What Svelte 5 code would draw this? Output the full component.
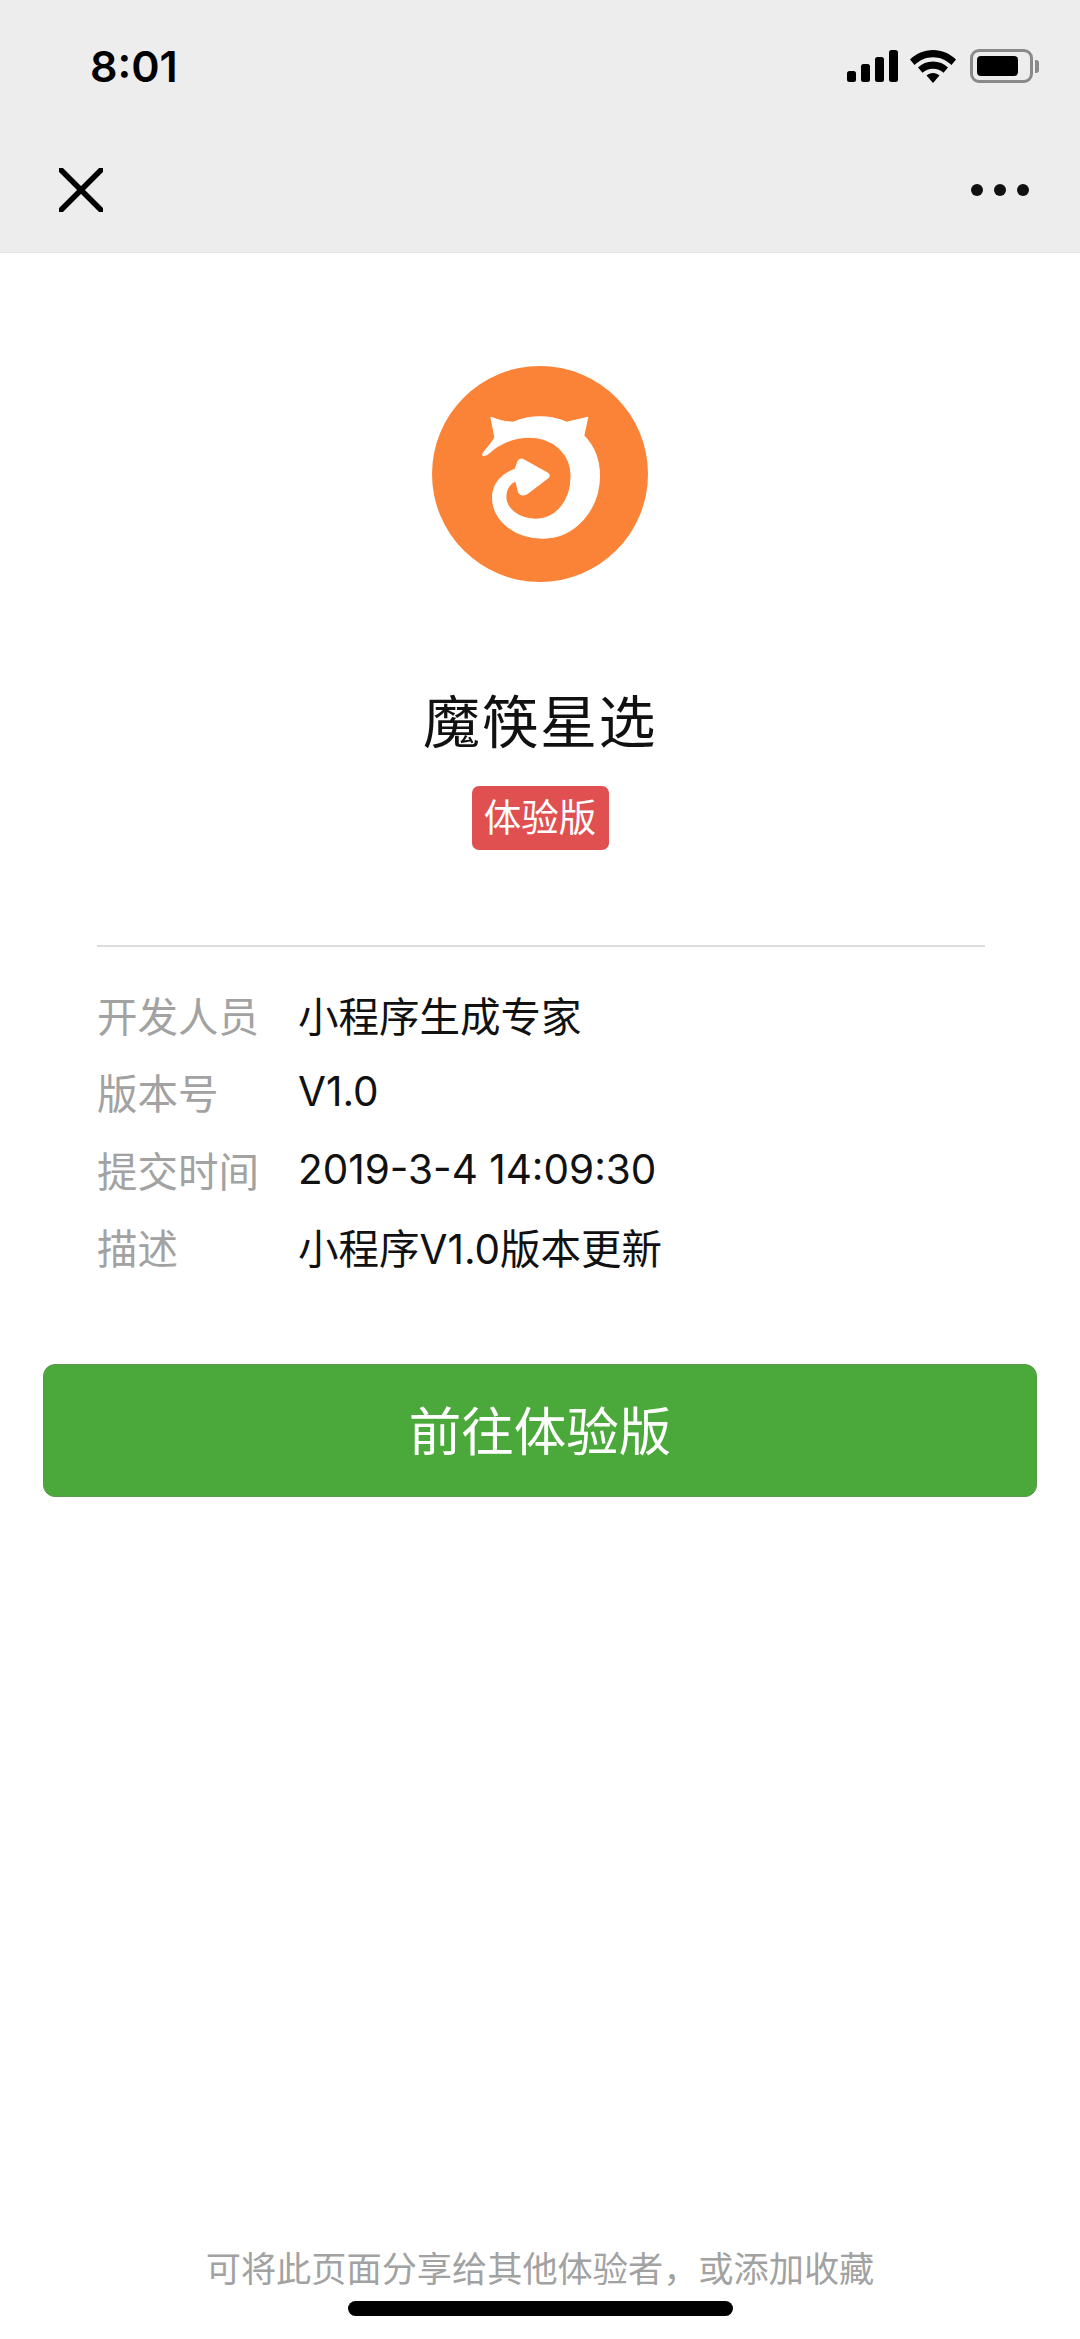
<script>
  const rows = [
    { label: "开发人员", value: "小程序生成专家" },
    { label: "版本号", value: "V1.0" },
    { label: "提交时间", value: "2019-3-4 14:09:30" },
    { label: "描述", value: "小程序V1.0版本更新" },
  ];
</script>

<div class="page">
  <header class="top">
    <div class="status">
      <span class="time">8:01</span>
      <div class="status-icons">
        <svg width="51" height="32" viewBox="0 0 51 32" class="signal">
          <rect x="0" y="21" width="9" height="11" rx="2.5" />
          <rect x="14" y="14" width="9" height="18" rx="2.5" />
          <rect x="28" y="7" width="9" height="25" rx="2.5" />
          <rect x="42" y="0" width="9" height="32" rx="2.5" />
        </svg>
        <svg width="46" height="33" viewBox="0 0 46 33" class="wifi">
          <path d="M23 0C14 0 6.500 3.500 0 9.500L4.500 15C10 10 16 7.300 23 7.300S36 10 41.500 15L46 9.500C39.500 3.500 32 0 23 0Z" />
          <path d="M23 11.500C17 11.500 12 13.800 8 17.500L12.500 22.800C15.500 20.200 19 18.800 23 18.800S30.500 20.200 33.500 22.800L38 17.500C34 13.800 29 11.500 23 11.500Z" />
          <path d="M23 23C20.500 23 18.300 23.900 16.500 25.500L23 33L29.500 25.500C27.700 23.900 25.500 23 23 23Z" />
        </svg>
        <div class="battery"><span class="level"></span></div>
        <span class="cap"></span>
      </div>
    </div>
    <nav class="nav">
      <svg width="44" height="44" viewBox="0 0 44 44" class="close">
        <path d="M2 2L42 42M42 2L2 42" />
      </svg>
      <div class="dots"><span></span><span></span><span></span></div>
    </nav>
  </header>

  <main class="content">
    <svg class="logo" width="216" height="216" viewBox="97 77 646 646">
      <circle cx="420" cy="400" r="323" fill="#fb8337" />
      <path
        fill="#fff"
        stroke="#fff"
        stroke-width="3"
        stroke-linejoin="round"
        d="M250 338C262 320 277 308 285 290L273 230Q310 245 340 245Q420 213 500 245L563 230L551 285C583 318 598 358 598 405C598 505 525 592 430 592C346 592 278 540 278 470C278 430 305 400 345 386L355 360Q362 352 372 358L442 397Q454 405 442 413L380 460Q364 468 356 455L347 420C327 430 318 450 318 468C318 505 358 535 408 535C468 535 513 480 513 405C513 340 460 290 390 290C335 290 295 310 262 342Q245 350 250 338Z"
      />
    </svg>
    <h1 class="title">魔筷星选</h1>
    <span class="badge">体验版</span>

    <div class="divider"></div>

    <dl class="info">
      {#each rows as row}
        <div class="row">
          <dt>{row.label}</dt>
          <dd>{row.value}</dd>
        </div>
      {/each}
    </dl>

    <button type="button" class="go">前往体验版</button>
  </main>

  <footer class="foot">
    <p>可将此页面分享给其他体验者，或添加收藏</p>
    <div class="home"></div>
  </footer>
</div>

<style>
  :global(body) {
    margin: 0;
    background: #fff;
  }

  .page {
    display: flex;
    flex-direction: column;
    height: 2339px;
    overflow: hidden;
    font-family: Inter, "Noto Sans CJK SC", sans-serif;
    color: #111;
  }

  .top {
    box-sizing: border-box;
    height: 253px;
    flex: none;
    background: #ededed;
    border-bottom: 1px solid #e6e6e6;
  }

  .status {
    display: flex;
    align-items: center;
    justify-content: space-between;
    height: 132px;
    padding: 0 41px 0 90px;
  }

  .time {
    font-size: 43px;
    font-weight: 600;
    color: #000;
  }

  .status-icons {
    display: flex;
    align-items: center;
  }

  .signal,
  .wifi {
    fill: #000;
  }

  .wifi {
    margin: 0 14px 0 12px;
  }

  .battery {
    box-sizing: border-box;
    width: 63px;
    height: 34px;
    padding: 4px;
    border: 3px solid #8a8a8a;
    border-radius: 9px;
  }

  .level {
    display: block;
    width: 41px;
    height: 100%;
    background: #000;
    border-radius: 4px;
  }

  .cap {
    width: 4px;
    height: 13px;
    margin-left: 2px;
    background: #8a8a8a;
    border-radius: 0 3px 3px 0;
  }

  .nav {
    display: flex;
    align-items: center;
    justify-content: space-between;
    height: 116px;
    padding: 0 51px 0 59px;
  }

  .close {
    fill: none;
    stroke: #000;
    stroke-width: 5.5;
    stroke-linecap: round;
  }

  .dots {
    display: flex;
    gap: 11px;
  }

  .dots span {
    width: 12px;
    height: 12px;
    background: #111;
    border-radius: 50%;
  }

  .content {
    display: flex;
    flex-direction: column;
    align-items: center;
    padding: 113px 43px 0;
  }

  .logo {
    display: block;
  }

  .title {
    margin: 101px 0 0;
    font-size: 57px;
    line-height: 80px;
    font-weight: 400;
    color: #111;
    letter-spacing: 1.500px;
  }

  .badge {
    margin-top: 23px;
    width: 137px;
    height: 64px;
    line-height: 63px;
    text-align: center;
    font-size: 37.500px;
    color: #fff;
    background: #e05050;
    border-radius: 7px;
  }

  .divider {
    align-self: stretch;
    height: 1.500px;
    margin: 95px 52px 0 54px;
    background: #dcdcdc;
  }

  .info {
    align-self: stretch;
    margin: 29px 0 0 54px;
  }

  .row {
    display: flex;
    height: 77.500px;
    align-items: center;
    font-size: 40.500px;
  }

  dt {
    width: 201px;
    color: #a2a2a2;
  }

  dd {
    margin: 0;
    color: #111;
  }

  .go {
    box-sizing: border-box;
    align-self: stretch;
    height: 133px;
    margin-top: 78px;
    padding: 0 0 4px;
    font: inherit;
    font-size: 52.500px;
    color: #fff;
    background: #4ba83a;
    border: 1.500px solid #5b9a4e;
    border-radius: 12px;
  }

  .foot {
    display: flex;
    flex-direction: column;
    align-items: center;
    margin-top: auto;
    padding-bottom: 23px;
  }

  .foot p {
    margin: 0 0 7px;
    font-size: 35.200px;
    line-height: 50px;
    color: #a2a2a2;
  }

  .home {
    width: 385px;
    height: 15px;
    background: #000;
    border-radius: 8px;
  }
</style>
